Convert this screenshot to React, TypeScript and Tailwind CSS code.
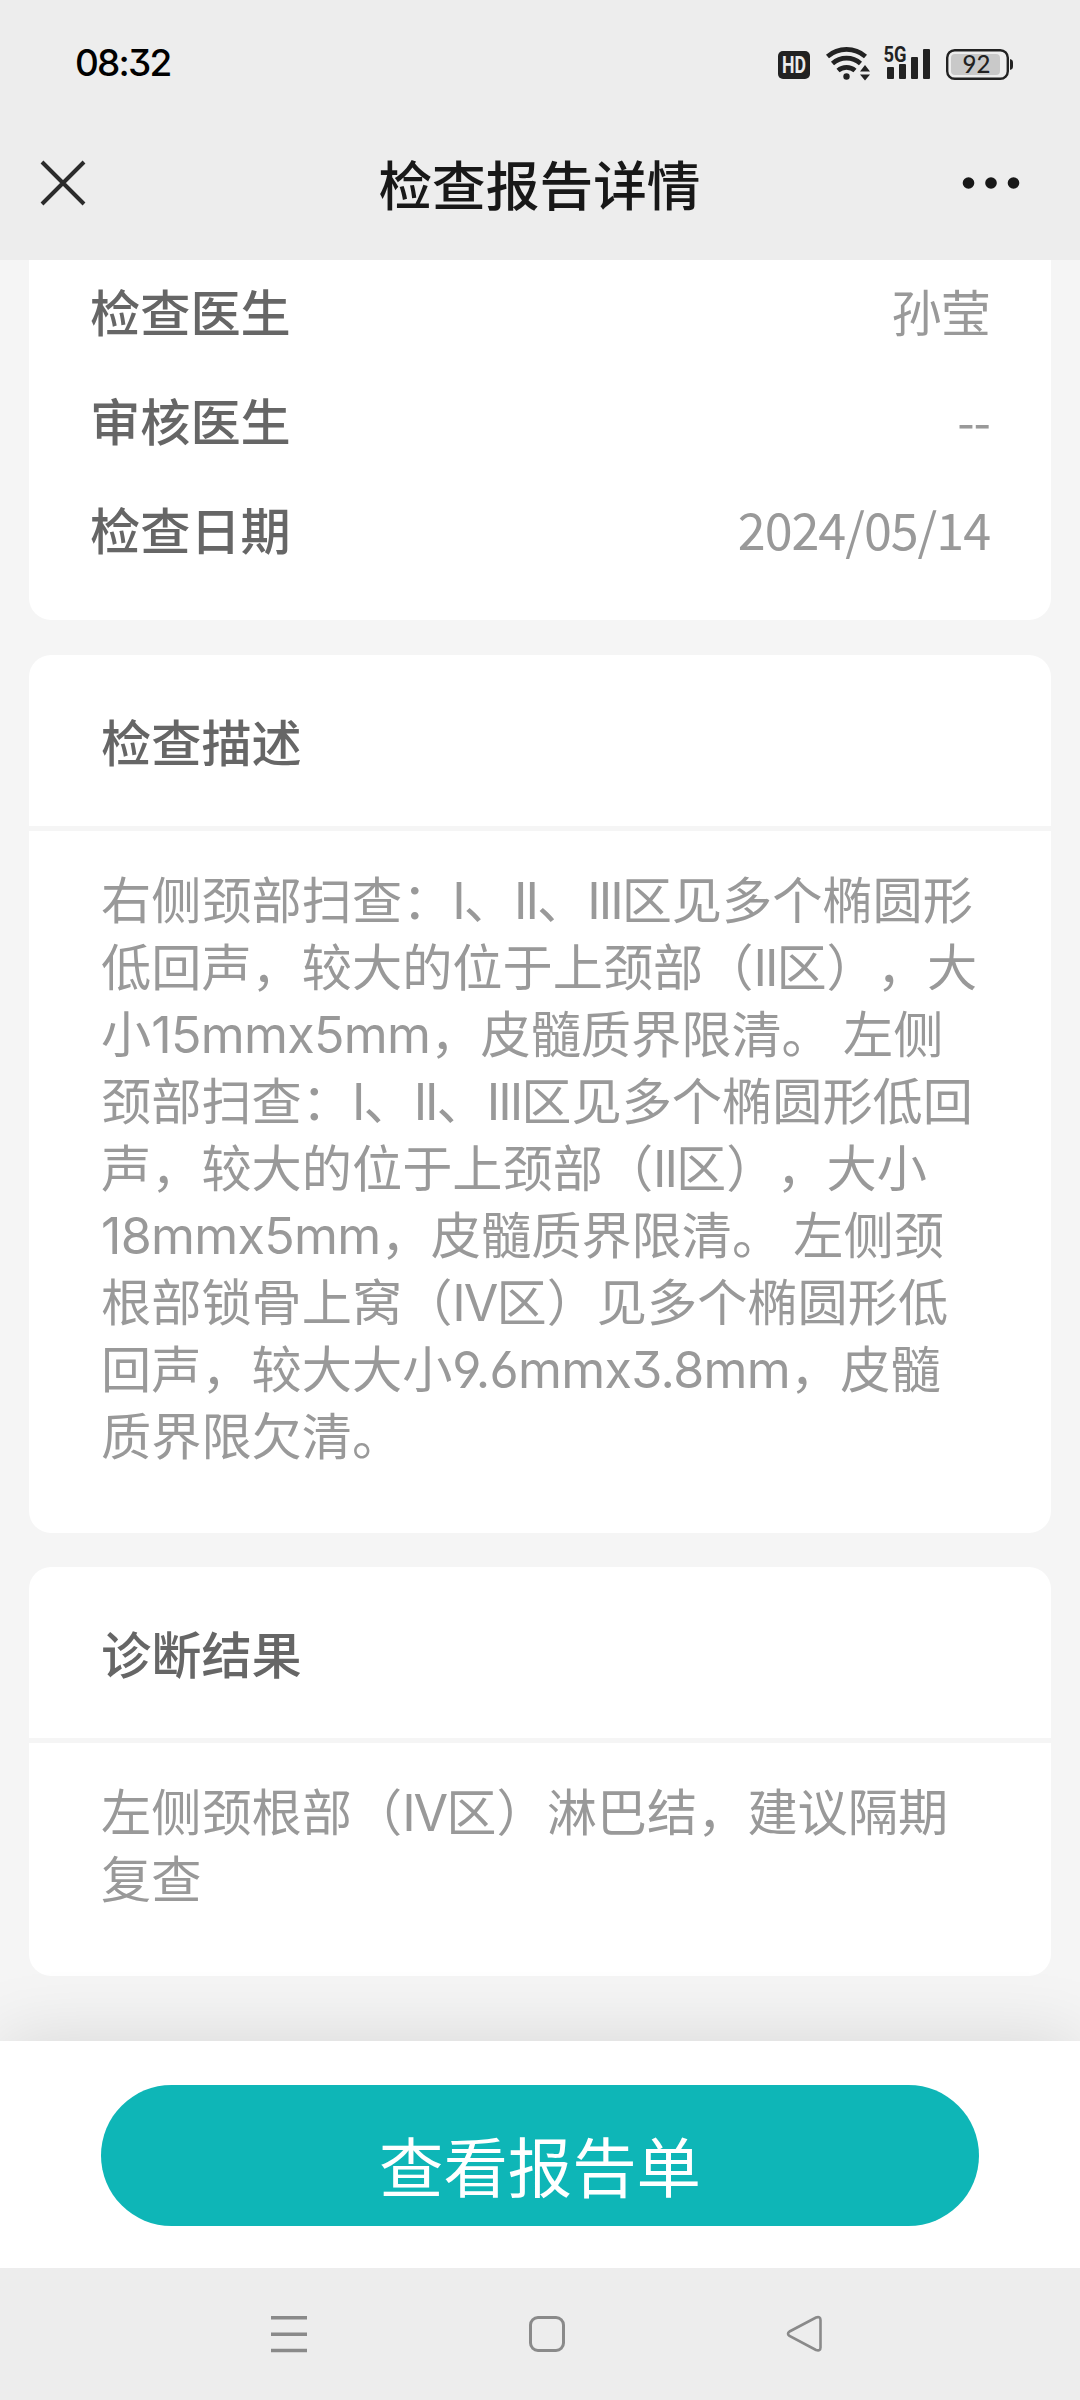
import type { ReactNode } from 'react'

const infoRows = [
  { label: '检查医生', value: '孙莹' },
  { label: '审核医生', value: '--' },
  { label: '检查日期', value: '2024/05/14' },
]

const descriptionLines = [
  '右侧颈部扫查：I、II、III区见多个椭圆形',
  '低回声，较大的位于上颈部（II区），大',
  '小15mmx5mm，皮髓质界限清。 左侧',
  '颈部扫查：I、II、III区见多个椭圆形低回',
  '声，较大的位于上颈部（II区），大小',
  '18mmx5mm，皮髓质界限清。 左侧颈',
  '根部锁骨上窝（IV区）见多个椭圆形低',
  '回声，较大大小9.6mmx3.8mm，皮髓',
  '质界限欠清。',
]

const resultLines = ['左侧颈根部（IV区）淋巴结，建议隔期', '复查']

function StatusBar() {
  return (
    <div className="flex h-[126px] items-center justify-between pr-[66px] pl-[75px]">
      <span className="font-['Inter',sans-serif] text-[37px] font-medium tracking-[-1.8px] text-black [font-feature-settings:'cv09']">
        08:32
      </span>
      <svg width="238" height="56" viewBox="776 33 238 56" fill="#222">
        <rect x="778" y="49" width="32" height="28" rx="5" />
        <text x="782" y="71" fill="#ececec" fontFamily="Roboto" fontWeight="700" fontSize="23" textLength="24" lengthAdjust="spacingAndGlyphs">HD</text>
        <g fill="none" stroke="#222" strokeWidth="4.6">
          <path d="M827.5 54.5a29 29 0 0 1 38 0" />
          <path d="M832.5 61.5a21 21 0 0 1 28 0" />
          <path d="M838 68.5a13 13 0 0 1 17 0" />
        </g>
        <circle cx="846.5" cy="74.5" r="3.2" />
        <path d="M860 69.5h10l-5-6.5zM860 72.5h10l-5 6z" />
        <text x="883.5" y="60" fontFamily="Roboto" fontWeight="700" fontSize="21.5" textLength="23" lengthAdjust="spacingAndGlyphs">5G</text>
        <rect x="887" y="65" width="7" height="12" rx="1" />
        <rect x="899" y="62" width="7" height="15" rx="1" />
        <rect x="911" y="55" width="7" height="22" rx="1" />
        <rect x="923" y="47" width="7" height="30" rx="1" />
        <rect x="947.2" y="48.2" width="60.6" height="28.6" rx="7.5" fill="none" stroke="#222" strokeWidth="2.4" />
        <rect x="951" y="52" width="49" height="21" rx="4" fill="#c9c9c9" />
        <path d="M1010 57c3 1 3 2 3 5.5s0 4.5-3 5.5z" />
        <text x="976.5" y="71" textAnchor="middle" fontFamily="Lato" fontSize="24" fontWeight="500">92</text>
      </svg>
    </div>
  )
}

function TitleBar() {
  return (
    <header className="flex h-[134px] items-start justify-between px-[40px] pt-[30px]">
      <svg className="mt-[4px]" width="46" height="46" viewBox="0 0 46 46" stroke="#2b2b2b" strokeWidth="4" fill="none">
        <path d="M2 2l42 42M44 2L2 44" />
      </svg>
      <h1 className="pl-[31px] text-[53.7px] leading-[54px] font-medium text-[#181818]">检查报告详情</h1>
      <svg className="mt-[20px] mr-[20px]" width="58" height="14" viewBox="0 0 58 14" fill="#181818">
        <circle cx="6.5" cy="7" r="5.8" />
        <circle cx="29" cy="7" r="5.8" />
        <circle cx="51.5" cy="7" r="5.8" />
      </svg>
    </header>
  )
}

// Latin runs get their own face and tighter tracking than the Chinese text.
function MixedText({ text }: { text: string }) {
  const parts = text.split(/([A-Za-z0-9.]+)/)
  return (
    <>
      {parts.map((part, i) =>
        /^[IV]+$/.test(part) ? (
          <span key={i} className="font-['Inter',sans-serif] leading-none tracking-[-2px]">{part}</span>
        ) : /^[A-Za-z0-9.]+$/.test(part) ? (
          <span key={i} className="font-['Inter',sans-serif] leading-none tracking-[-0.7px] [font-feature-settings:'cv03','cv04','cv09']">{part}</span>
        ) : (
          part
        ),
      )}
    </>
  )
}

function Section({ title, children }: { title: string; children: ReactNode }) {
  return (
    <section className="overflow-hidden rounded-[22px] bg-white">
      <h2 className="h-[176px] border-b-[5px] border-[#f5f5f5] pl-[72px] text-[50.2px] leading-[171px] font-medium text-[#666]">
        {title}
      </h2>
      <div className="pt-[33px] pb-[66px] pl-[72px] text-[50.2px] leading-[67px] text-[#999]">{children}</div>
    </section>
  )
}

function NavBar() {
  return (
    <nav className="flex h-[132px] items-start bg-[#ededed] pt-[47px] pl-[270px]">
      <svg width="553" height="38" viewBox="270 2315 553 38" fill="none" stroke="#8a8a8a" strokeWidth="3.5">
        <path d="M271 2317.7h36M271 2334.2h36M271 2350.4h36" />
        <rect x="530.5" y="2317.5" width="33" height="33" rx="7.5" strokeWidth="3" />
        <path d="M789.5 2331.5L816 2317.5Q820.5 2316 820.5 2320V2347.5Q820.5 2351.5 816 2350L789.5 2336Q786.5 2333.8 789.5 2331.5z" strokeWidth="2.6" />
      </svg>
    </nav>
  )
}

export default function App() {
  return (
    <div className="flex h-[2400px] w-[1080px] flex-col overflow-hidden bg-[#f5f5f5] font-['Noto_Sans_CJK_SC',sans-serif] whitespace-nowrap [text-spacing-trim:space-all]">
      <div className="bg-[#ededed]">
        <StatusBar />
        <TitleBar />
      </div>

      <main className="flex-1 px-[29px]">
        <div className="h-[360px] rounded-b-[22px] bg-white px-[61px]">
          {infoRows.map((row) => (
            <div key={row.label} className="flex h-[109px] justify-between text-[50.2px] leading-[101px]">
              <span className="font-medium text-[#666]">{row.label}</span>
              <span className="tracking-[-1px] text-[#999]">{row.value}</span>
            </div>
          ))}
        </div>

        <div className="mt-[35px] flex flex-col gap-[34px]">
          <Section title="检查描述">
            {descriptionLines.map((line) => (
              <p key={line}><MixedText text={line} /></p>
            ))}
          </Section>
          <Section title="诊断结果">
            {resultLines.map((line) => (
              <p key={line}><MixedText text={line} /></p>
            ))}
          </Section>
        </div>
      </main>

      <div className="relative h-[227px] bg-white px-[101px] pt-[44px] shadow-[0_0_70px_rgba(0,0,0,0.13)]">
        <button className="block h-[141px] w-full rounded-full bg-[#0eb6b7] pt-[18px] text-[64.4px] leading-[123px] text-white">
          查看报告单
        </button>
      </div>
      <div className="relative">
        <NavBar />
      </div>
    </div>
  )
}
